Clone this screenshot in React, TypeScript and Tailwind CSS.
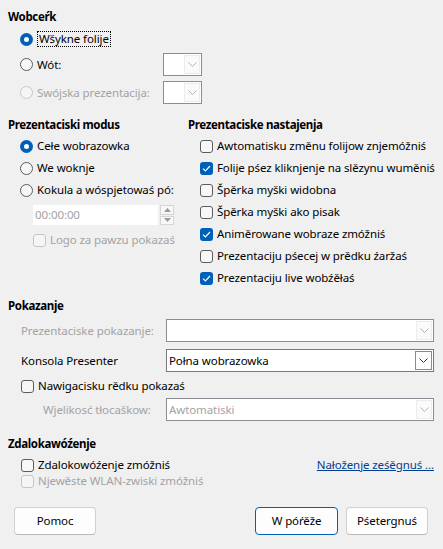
import React from "react";

const Chevron = ({ dark }: { dark?: boolean }) => (
  <svg width="9" height="5" viewBox="0 0 9 5" className="block">
    <polyline
      points="0.5,0.5 4.5,4.5 8.5,0.5"
      fill="none"
      stroke={dark ? "#333333" : "#b4b4b4"}
      strokeWidth="1"
    />
  </svg>
);

const Radio = ({ checked, disabled }: { checked?: boolean; disabled?: boolean }) =>
  checked ? (
    <span className="w-[13px] h-[13px] rounded-full bg-[#005fb8] flex items-center justify-center shrink-0">
      <span className="w-[5px] h-[5px] rounded-full bg-white" />
    </span>
  ) : (
    <span
      className={
        "w-[13px] h-[13px] rounded-full border shrink-0 " +
        (disabled ? "border-[#c6c6c6] bg-[#f5f5f5]" : "border-[#5c5c5c] bg-[#f7f7f7]")
      }
    />
  );

const Check = ({ checked, disabled }: { checked?: boolean; disabled?: boolean }) =>
  checked ? (
    <span className="w-[13px] h-[13px] rounded-[3px] bg-[#005fb8] flex items-center justify-center shrink-0">
      <svg width="9" height="7" viewBox="0 0 9 7">
        <polyline points="1,3.6 3.4,6 8,1" fill="none" stroke="white" strokeWidth="1.2" />
      </svg>
    </span>
  ) : (
    <span
      className={
        "w-[13px] h-[13px] rounded-[3px] border shrink-0 " +
        (disabled ? "border-[#c6c6c6] bg-[#f5f5f5]" : "border-[#5c5c5c] bg-[#f7f7f7]")
      }
    />
  );

const Combo = ({
  value,
  active,
  disabled,
  w,
}: {
  value?: string;
  active?: boolean;
  disabled?: boolean;
  w: string;
}) => (
  <div
    className={
      "h-[23px] bg-white border flex items-stretch " +
      w +
      (active ? " border-[#7a7a7a]" : " border-[#8c8c94]")
    }
  >
    <div
      className={
        "flex-1 flex items-center pl-[2px] truncate " + (disabled ? "text-[#a3a3a3]" : "text-black")
      }
    >
      {value}
    </div>
    {active ? (
      <div className="w-[17px] my-[1px] mr-[1px] border border-[#8a8a8a] bg-white flex items-center justify-center">
        <Chevron dark />
      </div>
    ) : (
      <div className="w-[16px] my-[1px] mr-[1px] border border-[#ececec] bg-[#fafafa] flex items-center justify-center">
        <Chevron />
      </div>
    )}
  </div>
);

const H = ({ children }: { children: React.ReactNode }) => (
  <div className="font-bold h-4 tracking-[-0.35px] whitespace-nowrap">{children}</div>
);

export default function App() {
  return (
    <div className="w-[443px] h-[549px] bg-[#f0f0f0] text-[11.5px] tracking-[-0.1px] leading-4 text-black font-['Noto_Sans',sans-serif] overflow-hidden">
      {/* Wobcerk */}
      <div className="pl-2 pt-[9px]">
        <H>Wobceŕk</H>
        <div className="pl-3">
          <div className="flex items-center h-[22px] mt-[3px] gap-1">
            <Radio checked />
            <span className="border border-dotted border-black px-[1px] leading-[14px]">Wšykne folije</span>
          </div>
          <div className="grid grid-cols-[143px_39px] items-center h-[23px] mt-[3px]">
            <div className="flex items-center gap-1">
              <Radio />
              <span>Wót:</span>
            </div>
            <Combo w="w-[39px]" />
          </div>
          <div className="grid grid-cols-[143px_39px] items-center h-[23px] mt-[5px]">
            <div className="flex items-center gap-1">
              <Radio disabled />
              <span className="text-[#a3a3a3]">Swójska prezentacija:</span>
            </div>
            <Combo w="w-[39px]" />
          </div>
        </div>
      </div>

      {/* two columns */}
      <div className="flex mt-[13px] pl-2">
        <div className="w-[180px] shrink-0">
          <H>Prezentaciski modus</H>
          <div className="pl-3 mt-[2px]">
            <div className="flex items-center h-[22px] gap-1">
              <Radio checked />
              <span>Cełe wobrazowka</span>
            </div>
            <div className="flex items-center h-[22px] gap-1">
              <Radio />
              <span>We woknje</span>
            </div>
            <div className="flex items-center h-[22px] gap-1">
              <Radio />
              <span>Kokula a wóspjetowaś pó:</span>
            </div>
          </div>
          <div className="ml-[25px] mt-[4px] flex h-[20px] gap-[2px]">
            <div className="w-[125px] bg-white flex items-center pl-[2px] text-[#a3a3a3]">00:00:00</div>
            <div className="w-[14px] flex flex-col gap-[1px]">
              <div className="flex-1 border border-[#d6d6d6] bg-[#f7f7f7] flex items-center justify-center">
                <svg width="7" height="4" viewBox="0 0 7 4">
                  <polygon points="0,4 3.5,0 7,4" fill="#9a9a9a" />
                </svg>
              </div>
              <div className="flex-1 border border-[#d6d6d6] bg-[#f7f7f7] flex items-center justify-center">
                <svg width="7" height="4" viewBox="0 0 7 4">
                  <polygon points="0,0 3.5,4 7,0" fill="#9a9a9a" />
                </svg>
              </div>
            </div>
          </div>
          <div className="ml-[25px] mt-[7px] flex items-center h-[16px] gap-1">
            <Check disabled />
            <span className="text-[#a3a3a3] whitespace-nowrap">Logo za pawzu pokazaś</span>
          </div>
        </div>
        <div className="flex-1 min-w-0">
          <H>Prezentaciske nastajenja</H>
          <div className="pl-3 mt-[2px]">
            {[
              ["Awtomatisku změnu folijow znjemóžniś", false],
              ["Folije pśez kliknjenje na slězynu wuměniś", true],
              ["Špěrka myški widobna", false],
              ["Špěrka myški ako pisak", false],
              ["Animěrowane wobraze zmóžniś", true],
              ["Prezentaciju pśecej w prědku źaržaś", false],
              ["Prezentaciju live wobźěłaś", true],
            ].map(([t, c]) => (
              <div key={t as string} className="flex items-center h-[22px] gap-1">
                <Check checked={c as boolean} />
                <span className="whitespace-nowrap">{t as string}</span>
              </div>
            ))}
          </div>
        </div>
      </div>

      {/* Pokazanje */}
      <div className="pl-2 mt-[9px]">
        <H>Pokazanje</H>
        <div className="pl-[13px]">
          <div className="grid grid-cols-[145px_268px] items-center mt-[5px]">
            <span className="text-[#a3a3a3]">Prezentaciske pokazanje:</span>
            <Combo w="w-[268px]" />
          </div>
          <div className="grid grid-cols-[145px_268px] items-center mt-[7px]">
            <span>Konsola Presenter</span>
            <Combo w="w-[268px]" value="Połna wobrazowka" active />
          </div>
          <div className="flex items-center h-[16px] gap-1 mt-[6px]">
            <Check />
            <span>Nawigacisku rědku pokazaś</span>
          </div>
          <div className="grid grid-cols-[145px_268px] items-center mt-[4px]">
            <span className="pl-[22px] text-[#a3a3a3]">Wjelikosć tłocaškow:</span>
            <Combo w="w-[268px]" value="Awtomatiski" disabled />
          </div>
        </div>
      </div>

      {/* Zdalokawozenje */}
      <div className="pl-2 mt-[15px] pr-[9px]">
        <H>Zdalokawóźenje</H>
        <div className="pl-[13px] mt-[5px]">
          <div className="flex items-center justify-between h-[16px]">
            <div className="flex items-center gap-1">
              <Check />
              <span>Zdalokowóźenje zmóžniś</span>
            </div>
            <span className="text-[#003e92] underline">Nałoženje ześěgnuś ...</span>
          </div>
          <div className="flex items-center h-[16px] gap-1">
            <Check disabled />
            <span className="text-[#a3a3a3]">Njewěste WLAN-zwiski zmóžniś</span>
          </div>
        </div>
      </div>

      {/* Buttons */}
      <div className="flex items-center justify-between pl-[14px] pr-[15px] mt-[18px]">
        <button className="w-[82px] h-[28px] rounded-[4px] bg-[#fdfdfd] border border-[#d0d0d0] border-b-[#b8b8b8]">
          Pomoc
        </button>
        <div className="flex gap-2">
          <button className="w-[83px] h-[28px] rounded-[4px] bg-[#fdfdfd] border border-[#005fb8]">
            W póŕěže
          </button>
          <button className="w-[82px] h-[28px] rounded-[4px] bg-[#fdfdfd] border border-[#d0d0d0] border-b-[#b8b8b8]">
            Pśetergnuś
          </button>
        </div>
      </div>
    </div>
  );
}
